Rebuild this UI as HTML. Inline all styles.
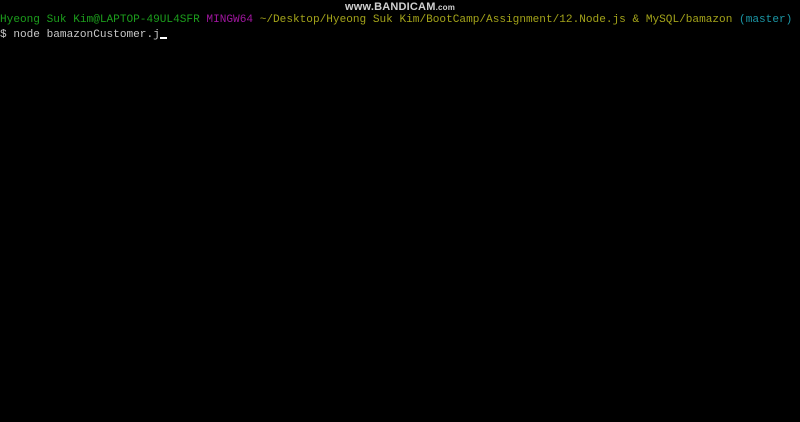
<!DOCTYPE html>
<html><head><meta charset="utf-8"><style>
html,body{margin:0;padding:0;background:#000;width:800px;height:422px;overflow:hidden}
.t{position:absolute;left:0;font-family:"Liberation Mono",monospace;font-size:11.1px;line-height:15px;white-space:pre;color:#c0c0c0}
.g{color:#1c9e1c}.m{color:#a0169f}.y{color:#a3a31a}.c{color:#1b97a6}
.wm{position:absolute;top:1px;left:0;width:800px;text-align:center;font-family:"Liberation Sans",sans-serif;font-weight:bold;font-size:11px;color:#d0d0d0;letter-spacing:0.2px}
.wm small{font-size:8px}
.cur{display:inline-block;width:7px;height:2px;background:#fff;vertical-align:-2px}
</style></head><body>
<div class="wm">www.BANDICAM<small>.com</small></div>
<div class="t" style="top:13px"><span class="g">Hyeong Suk Kim@LAPTOP-49UL4SFR</span> <span class="m">MINGW64</span> <span class="y">~/Desktop/Hyeong Suk Kim/BootCamp/Assignment/12.Node.js &amp; MySQL/bamazon</span> <span class="c">(master)</span></div>
<div class="t" style="top:28px;color:#c8c8c8">$ node bamazonCustomer.j<span class="cur"></span></div>
</body></html>
